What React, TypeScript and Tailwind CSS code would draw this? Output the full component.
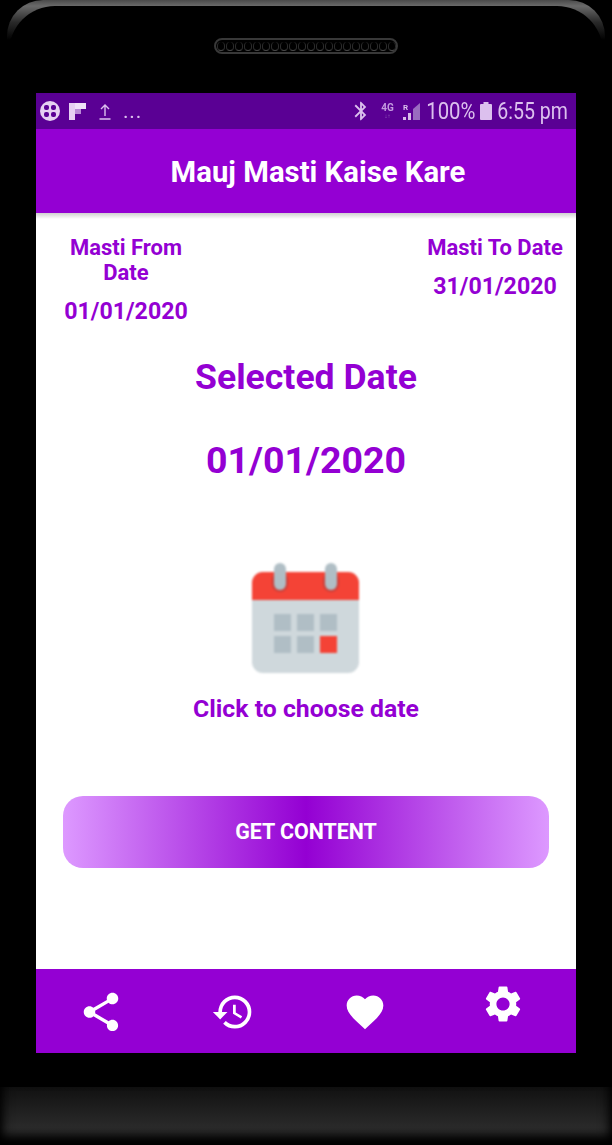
import React from "react";
import { MdShare, MdHistory, MdFavorite, MdSettings, MdBluetooth } from "react-icons/md";

function Calendar() {
  return (
    <svg width="112" height="112" viewBox="0 0 112 112" className="blur-[0.8px]">
      <rect x="2" y="10" width="107" height="101" rx="11" fill="#cfd8dc" />
      <path d="M2 38V21a11 11 0 0 1 11-11h85a11 11 0 0 1 11 11v17z" fill="#f44336" />
      <rect x="22" y="10" width="16" height="20" rx="8" fill="#c8403a" />
      <rect x="73" y="10" width="16" height="20" rx="8" fill="#c8403a" />
      <rect x="24" y="1" width="12" height="27" rx="6" fill="#b0bec5" />
      <rect x="75" y="1" width="12" height="27" rx="6" fill="#b0bec5" />
      <rect x="24" y="52" width="17" height="17" fill="#b0bec5" />
      <rect x="47" y="52" width="17" height="17" fill="#b0bec5" />
      <rect x="70" y="52" width="17" height="17" fill="#b0bec5" />
      <rect x="24" y="74" width="17" height="17" fill="#b0bec5" />
      <rect x="47" y="74" width="17" height="17" fill="#b0bec5" />
      <rect x="70" y="74" width="17" height="17" fill="#f44336" />
    </svg>
  );
}

function Speaker() {
  return (
    <div className="w-[184px] h-[16px] rounded-full border-2 border-[#383838] bg-black flex items-center justify-center gap-[1px] overflow-hidden blur-[0.3px]">
      {Array.from({ length: 20 }).map((_, i) => (
        <span key={i} className="w-[8px] h-[9px] shrink-0 rounded-full border-b border-[#4a4a4a] border-x border-x-[#2c2c2c]" />
      ))}
    </div>
  );
}

function StatusBar() {
  return (
    <div className="h-[36px] bg-[#5a0094] flex items-center pl-[4px] pr-[8px] text-[#dcc0ee] shrink-0">
      <svg width="20" height="20" viewBox="0 0 20 20" className="blur-[0.4px]">
        <circle cx="10" cy="10" r="10" fill="#e6d0f2" />
        <g fill="#5a0094">
          <rect x="4" y="4" width="5" height="5" rx="2" />
          <rect x="11" y="4" width="5" height="5" rx="2" />
          <rect x="4" y="11" width="5" height="5" rx="2" />
          <rect x="11" y="11" width="5" height="5" rx="2" />
        </g>
      </svg>
      <svg width="17" height="17" viewBox="0 0 17 17" className="ml-[9px] blur-[0.4px]">
        <rect x="0" y="0" width="6" height="17" fill="#e6d0f2" />
        <rect x="6" y="0" width="11" height="6" fill="#f0e2f8" />
        <rect x="6" y="6" width="6" height="5" fill="#b98ad6" />
      </svg>
      <svg width="12" height="17" viewBox="0 0 12 17" className="ml-[13px] blur-[0.3px]" fill="none" stroke="#dcc0ee" strokeWidth="1.4">
        <path d="M6 13V2M2 6l4-4 4 4M0.5 16h11" />
      </svg>
      <span className="ml-[12px] text-[21px] leading-none tracking-[0.8px] blur-[0.3px]">...</span>
      <div className="ml-auto flex items-center">
        <MdBluetooth size={22} color="#dcc0ee" className="blur-[0.3px]" />
        <div className="ml-[8px] w-[15px] flex flex-col items-center leading-none blur-[0.3px]">
          <span className="text-[10px] font-bold leading-[10px] text-[#c49be0]">4G</span>
          <span className="text-[6px] leading-[6px] text-[#9a6cc0]">↓↑</span>
        </div>
        <div className="ml-[8px] relative w-[17px] h-[17px] blur-[0.3px]">
          <svg width="17" height="17" viewBox="0 0 17 17">
            <path d="M10 6L17 0V17H10z" fill="#9a6cc0" />
            <path d="M0 17V14h3v3zM5 17V10h3v7z" fill="#d8bce8" />
          </svg>
          <span className="absolute left-0 top-0 text-[8px] font-bold leading-[9px] text-[#dcc0ee]">R</span>
        </div>
        <div className="ml-[7px] w-[47px] flex justify-center blur-[0.4px]">
          <span className="text-[23px] leading-none whitespace-nowrap scale-x-[0.885]">100%</span>
        </div>
        <svg width="12" height="18" viewBox="0 0 12 18" className="ml-[6px] blur-[0.3px]">
          <rect x="3.5" y="0" width="5" height="2" fill="#dcc0ee" />
          <rect x="0" y="2" width="12" height="16" rx="1" fill="#dcc0ee" />
        </svg>
        <div className="ml-[6px] w-[70px] flex justify-center blur-[0.4px]">
          <span className="text-[23px] leading-none whitespace-nowrap scale-x-[0.85]">6:55 pm</span>
        </div>
      </div>
    </div>
  );
}

export default function App() {
  return (
    <div className="w-[612px] h-[1145px] bg-black overflow-hidden flex flex-col font-['Roboto',sans-serif]">
      <div className="h-[1087px] px-[7px] shrink-0">
        <div className="h-full rounded-t-[36px] bg-[linear-gradient(180deg,#4a4a4a_0px,#6a6a6a_6px,#2a2a2a_22px,#000000_40px)] pt-[6px] px-[2px]">
          <div className="h-full rounded-t-[46px] bg-black px-[27px] flex flex-col">
            <div className="h-[87px] pt-[32px] flex justify-center shrink-0">
              <Speaker />
            </div>
            <div className="w-[540px] h-[960px] flex flex-col shrink-0">
              <StatusBar />
              <div className="h-[84px] bg-[#9400d3] flex items-center justify-center pl-[24px] pt-[3px] text-white text-[29.3px] font-bold shrink-0">
                Mauj Masti Kaise Kare
              </div>
              <div className="flex-1 bg-white flex flex-col text-[#9400d3] font-bold">
                <div className="h-[6px] bg-gradient-to-b from-[#d0d0d0] to-white" />
                <div className="flex justify-between pl-[20px] pr-[6px] pt-[16px] text-[22px] leading-[25px]">
                  <div className="w-[140px] text-center">
                    <div>Masti From Date</div>
                    <div className="mt-[14px] text-[23.2px]">01/01/2020</div>
                  </div>
                  <div className="w-[150px] text-center">
                    <div>Masti To Date</div>
                    <div className="mt-[14px] text-[23.2px]">31/01/2020</div>
                  </div>
                </div>
                <div className="mt-[32px] text-center text-[35.6px] leading-[42px]">Selected Date</div>
                <div className="mt-[41px] text-center text-[37.5px] leading-[42px]">01/01/2020</div>
                <div className="mt-[81px] flex justify-center">
                  <Calendar />
                </div>
                <div className="mt-[20px] text-center text-[24.8px] leading-[30px]">Click to choose date</div>
                <div className="mt-[72px] mx-[27px] h-[72px] pt-[1px] rounded-[20px] flex items-center justify-center text-white text-[21.4px] bg-[linear-gradient(90deg,#dd99ff_0%,#9400d3_50%,#dd99ff_100%)]">
                  GET CONTENT
                </div>
              </div>
              <div className="h-[84px] bg-[#9400d3] flex items-center text-white shrink-0 pl-[42px]">
                <MdShare size={46} className="mt-[2px]" />
                <MdHistory size={44} className="mt-[2px] ml-[87px]" />
                <MdFavorite size={44} className="mt-[2px] ml-[88px]" />
                <MdSettings size={44} className="-mt-[14px] ml-[94px]" />
              </div>
            </div>
          </div>
        </div>
      </div>
      <div className="h-[58px] bg-[linear-gradient(180deg,#111111_0%,#2a2a2a_70%,#1c1c1c_100%)] shadow-[inset_0_-10px_10px_-2px_#000,inset_8px_-4px_12px_-6px_#000,inset_-8px_-4px_12px_-6px_#000]" />
    </div>
  );
}
